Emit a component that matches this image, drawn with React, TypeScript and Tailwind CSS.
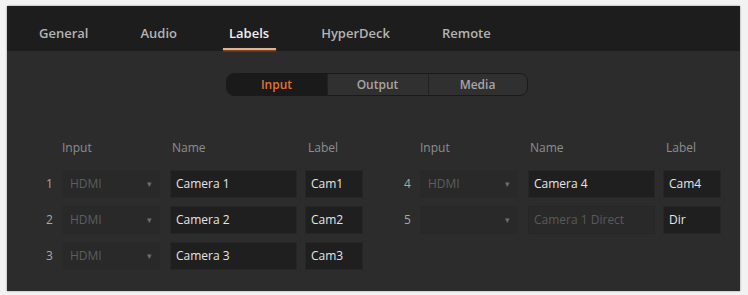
import React from "react";

const font = { fontFamily: '"Open Sans", "Noto Sans", sans-serif' };

type Row = { n: string; src: string; name: string; label: string; dimName?: boolean };

const left: Row[] = [
  { n: "1", src: "HDMI", name: "Camera 1", label: "Cam1" },
  { n: "2", src: "HDMI", name: "Camera 2", label: "Cam2" },
  { n: "3", src: "HDMI", name: "Camera 3", label: "Cam3" },
];
const right: Row[] = [
  { n: "4", src: "HDMI", name: "Camera 4", label: "Cam4" },
  { n: "5", src: "", name: "Camera 1 Direct", label: "Dir", dimName: true },
];

function Group({ rows }: { rows: Row[] }) {
  return (
    <div className="flex flex-col">
      <div className="flex h-[20px] items-center text-[12px] text-[#8e8e8e]">
        <div className="w-[18px]" />
        <div className="w-[98px]">Input</div>
        <div className="ml-[10px] w-[127px] pl-[2px]">Name</div>
        <div className="ml-[8px] w-[58px] pl-[3px]">Label</div>
      </div>
      <div className="mt-[12px] flex flex-col gap-[8px]">
        {rows.map((r) => (
          <div key={r.n} className="flex h-[28px] items-center text-[12px]">
            <div className="w-[18px] pl-[2px] text-[#a8a8a8]">{r.n}</div>
            <div className="flex h-full w-[98px] items-center justify-between bg-[#292929] pl-[8px] pr-[8px] text-[#5e5e5e]">
              <span>{r.src}</span>
              <span className="text-[9px] text-[#6e6e6e]">▾</span>
            </div>
            <div
              className={`ml-[10px] flex h-full w-[127px] items-center border border-[#262626] pl-[5px] ${
                r.dimName ? "bg-[#292929] text-[#5a5a5a]" : "bg-[#1f1f1f] text-[#e6e6e6]"
              }`}
            >
              {r.name}
            </div>
            <div className="ml-[8px] flex h-full w-[58px] items-center border border-[#262626] bg-[#1f1f1f] pl-[5px] text-[#e6e6e6]">
              {r.label}
            </div>
          </div>
        ))}
      </div>
    </div>
  );
}

export default function App() {
  const tabs = ["General", "Audio", "Labels", "HyperDeck", "Remote"];
  return (
    <div className="h-[295px] w-[748px] bg-[#f2f2f2] pl-[7px] pt-[6px]" style={font}>
      <div className="flex h-[285px] w-[733px] flex-col bg-[#2c2c2c] shadow-[0_0_2px_rgba(0,0,0,0.4)]">
        <div className="flex h-[45px] items-stretch gap-[52px] bg-[#1d1d1d] pl-[32px] pt-[10px] text-[13px] font-semibold">
          {tabs.map((t) => (
            <div key={t} className="relative flex items-center">
              <span className={t === "Labels" ? "text-[#f0f0f0]" : "text-[#b4b4b4]"}>{t}</span>
              {t === "Labels" && (
                <div className="absolute bottom-[1px] left-[-6px] right-[-7px] h-[2px] bg-[#d7b49a] shadow-[0_1px_2px_#b85a20]" />
              )}
            </div>
          ))}
        </div>
        <div className="flex flex-col items-center pl-[6px] pt-[22px]">
          <div className="flex h-[23px] overflow-hidden rounded-[8px] border border-[#1a1a1a] bg-[#303030] text-[12px] font-semibold">
            <div className="flex w-[100px] items-center justify-center bg-[#1a1a1a] text-[#e07436]">Input</div>
            <div className="flex w-[101px] items-center justify-center border-l border-[#222] text-[#a6a6a6]">Output</div>
            <div className="flex w-[99px] items-center justify-center border-l border-[#222] text-[#a6a6a6]">Media</div>
          </div>
        </div>
        <div className="mt-[42px] flex gap-[39px] pl-[37px]">
          <Group rows={left} />
          <Group rows={right} />
        </div>
      </div>
    </div>
  );
}
